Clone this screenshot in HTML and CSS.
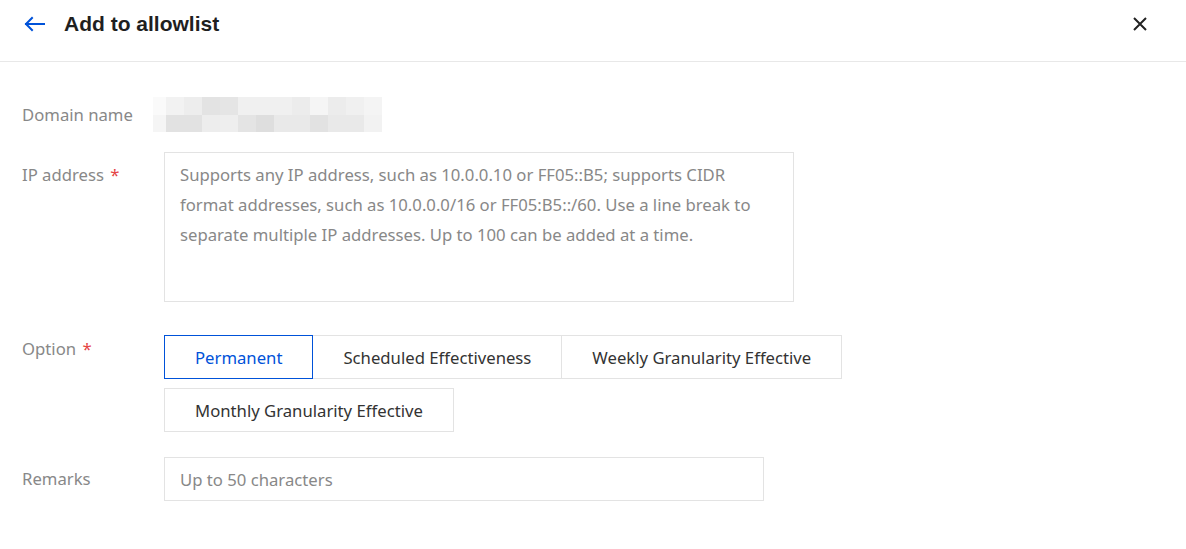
FILE: index.html
```html
<!DOCTYPE html>
<html lang="en">
<head>
<meta charset="utf-8">
<title>Add to allowlist</title>
<link rel="stylesheet" href="styles.css">
</head>
<body>
<div class="dialog">
  <header class="dialog-header">
    <div class="header-left">
      <span class="back-icon">
        <svg width="22" height="16" viewBox="0 0 22 16" fill="none" stroke="#0052d9" stroke-width="2" stroke-linecap="square">
          <path d="M2 8 H20"/>
          <path d="M8 2 L2 8 L8 14" stroke-linejoin="miter"/>
        </svg>
      </span>
      <h1 class="dialog-title">Add to allowlist</h1>
    </div>
    <span class="close-icon">
      <svg width="14" height="14" viewBox="0 0 14 14" fill="none" stroke="#222" stroke-width="2">
        <path d="M1 1 L13 13 M13 1 L1 13"/>
      </svg>
    </span>
  </header>

  <div class="form">
    <div class="form-row row-domain">
      <div class="form-label label-domain">Domain name</div>
      <div class="form-control">
        <div class="mosaic">
          <span style="background:#fafafa"></span><span style="background:#f2f2f2"></span><span style="background:#ededed"></span><span style="background:#e3e3e3"></span><span style="background:#e5e5e5"></span><span style="background:#f0f0f0"></span><span style="background:#f0f0f0"></span><span style="background:#f0f0f0"></span><span style="background:#ececec"></span><span style="background:#f5f5f5"></span><span style="background:#ececec"></span><span style="background:#f0f0f0"></span><span style="background:#f4f4f4"></span>
          <span style="background:#f5f5f5"></span><span style="background:#e2e2e2"></span><span style="background:#e2e2e2"></span><span style="background:#ededed"></span><span style="background:#eeeeee"></span><span style="background:#e4e4e4"></span><span style="background:#dedede"></span><span style="background:#e9e9e9"></span><span style="background:#e9e9e9"></span><span style="background:#e2e2e2"></span><span style="background:#e9e9e9"></span><span style="background:#e9e9e9"></span><span style="background:#f2f2f2"></span>
        </div>
      </div>
    </div>

    <div class="form-row row-ip">
      <div class="form-label label-ip">IP address <span class="required">*</span></div>
      <div class="form-control">
        <div class="textarea">Supports any IP address, such as 10.0.0.10 or FF05::B5; supports CIDR format addresses, such as 10.0.0.0/16 or FF05:B5::/60. Use a line break to separate multiple IP addresses. Up to 100 can be added at a time.</div>
      </div>
    </div>

    <div class="form-row row-option">
      <div class="form-label label-option">Option <span class="required">*</span></div>
      <div class="form-control">
        <div class="segmented">
          <span class="seg-item is-active">Permanent</span>
          <span class="seg-item">Scheduled Effectiveness</span>
          <span class="seg-item">Weekly Granularity Effective</span>
          <span class="seg-item seg-wrap">Monthly Granularity Effective</span>
        </div>
      </div>
    </div>

    <div class="form-row row-remarks">
      <div class="form-label label-remarks">Remarks</div>
      <div class="form-control">
        <div class="input">Up to 50 characters</div>
      </div>
    </div>
  </div>
</div>
</body>
</html>
```

FILE: styles.css
```css
* { box-sizing: border-box; }
html, body { margin: 0; padding: 0; background: #fff; }
body {
  font-family: "Noto Sans", "Open Sans", sans-serif;
  font-size: 16.7px;
  color: #333;
}
.dialog { width: 1186px; }
.dialog-header {
  height: 62px;
  border-bottom: 1px solid #e8e8e8;
  display: flex;
  justify-content: space-between;
  align-items: flex-start;
  padding: 12px 39px 0 24px;
}
.header-left { display: flex; align-items: center; height: 24px; }
.back-icon { display: flex; width: 22px; height: 16px; margin-right: 18px; }
.dialog-title {
  margin: 0;
  font-family: "Liberation Sans", Arial, sans-serif;
  font-weight: bold;
  font-size: 21px;
  line-height: 24px;
  color: #1f1f1f;
}
.close-icon { display: flex; width: 14px; height: 14px; margin-top: 5px; }

.form { padding: 0 22px; }
.form-row { display: flex; align-items: flex-start; }
.form-label {
  width: 142px;
  flex: none;
  color: #888;
  white-space: nowrap;
}
.required { color: #e54545; margin-left: 2px; }
.form-control { flex: 1; }

.row-domain { margin-top: 35px; }
.label-domain { line-height: 36px; }
.mosaic {
  margin-left: -11px;
  display: grid;
  grid-template-columns: 13px repeat(12, 18px);
  grid-template-rows: 18px 17px;
  width: 229px;
}

.row-ip { margin-top: 19px; }
.label-ip { line-height: 30px; padding-top: 8px; }
.textarea {
  width: 630px;
  height: 150px;
  border: 1px solid #e3e3e3;
  padding: 7px 15px;
  line-height: 30px;
  color: #888;
}

.row-option { margin-top: 33px; }
.label-option { line-height: 28px; }
.segmented {
  display: flex;
  flex-wrap: wrap;
  row-gap: 9px;
  max-width: 700px;
}
.seg-item {
  height: 44px;
  line-height: 44px;
  padding: 0 30px;
  border: 1px solid #e3e3e3;
  margin-right: -1px;
  color: #333;
  white-space: nowrap;
}
.seg-item.is-active {
  border-color: #0052d9;
  color: #0052d9;
  position: relative;
  z-index: 1;
}

.row-remarks { margin-top: 25px; }
.label-remarks { line-height: 44px; }
.input {
  width: 600px;
  height: 44px;
  border: 1px solid #e3e3e3;
  padding: 0 15px;
  line-height: 43px;
  color: #888;
}
```
